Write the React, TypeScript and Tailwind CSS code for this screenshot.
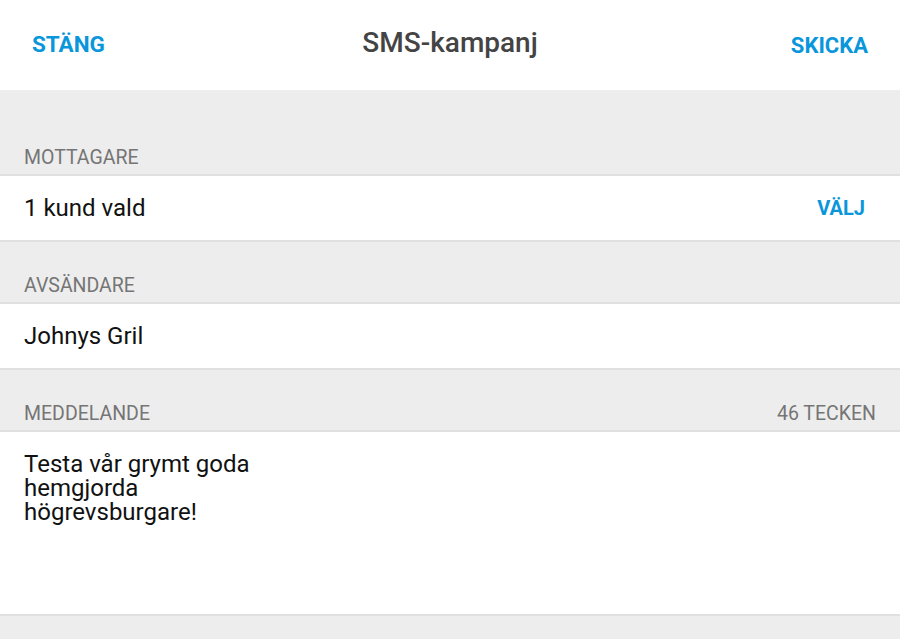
import { useState } from 'react';

const font = { fontFamily: 'Roboto, "Noto Sans", sans-serif' };

function SectionLabel({ label, extra, first }: { label: string; extra?: string; first?: boolean }) {
  return (
    <div
      className={`flex items-end justify-between px-6 pb-[5px] text-[19.5px] leading-[22px] text-[#757575] ${
        first ? 'pt-[57px]' : 'pt-[33px]'
      }`}
    >
      <span>{label}</span>
      {extra && <span>{extra}</span>}
    </div>
  );
}

export default function App() {
  const [message] = useState(['Testa vår grymt goda', 'hemgjorda', 'högrevsburgare!']);

  return (
    <div className="min-h-[639px] bg-[#ededed]" style={font}>
      <header className="grid h-[90px] grid-cols-[1fr_auto_1fr] items-center bg-white px-8">
        <button type="button" className="justify-self-start text-[22.5px] font-bold text-[#0a96db]">
          STÄNG
        </button>
        <h1 className="-mt-1 text-[28px] font-medium text-[#444]">SMS-kampanj</h1>
        <button type="button" className="justify-self-end text-[22px] font-bold text-[#0a96db]">
          SKICKA
        </button>
      </header>

      <SectionLabel label="MOTTAGARE" first />
      <div className="flex h-[68px] items-center justify-between border-y-2 border-[#e0e0e0] bg-white pl-6 pr-[35px]">
        <span className="text-[24px] text-[#111]">1 kund vald</span>
        <button type="button" className="text-[20px] font-bold text-[#0a96db]">
          VÄLJ
        </button>
      </div>

      <SectionLabel label="AVSÄNDARE" />
      <div className="flex h-[68px] items-center border-y-2 border-[#e0e0e0] bg-white px-6">
        <span className="text-[24px] text-[#111]">Johnys Gril</span>
      </div>

      <SectionLabel label="MEDDELANDE" extra="46 TECKEN" />
      <div className="h-[186px] border-y-2 border-[#e0e0e0] bg-white px-6 pt-5 text-[24px] leading-[24px] text-[#111]">
        {message.map((line) => (
          <div key={line}>{line}</div>
        ))}
      </div>
    </div>
  );
}
